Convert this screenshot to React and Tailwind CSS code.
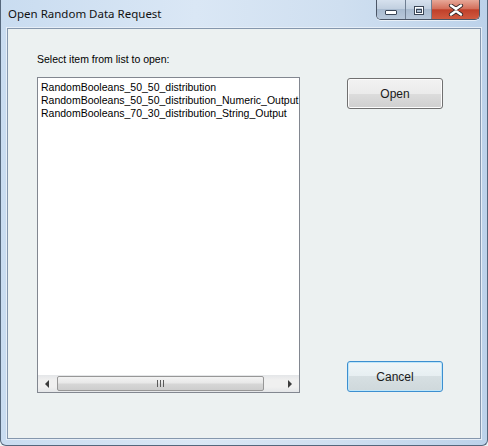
import React from "react";

const sans = { fontFamily: '"Liberation Sans", Arial, sans-serif' };

function TitleButtons() {
  return (
    <div className="flex h-[20px] mr-[7px] rounded-b-[5px] border border-t-0 border-[#4b5666] overflow-hidden shadow-[0_1px_0_rgba(255,255,255,0.6)]">
      <div className="w-[29px] h-full flex items-center justify-center bg-[linear-gradient(#d6e1ee,#c2d0e0_45%,#a9bbd0_50%,#b8c8da)] border-r border-[#6f7e92]">
        <svg width="14" height="8" viewBox="0 0 14 8" className="mt-[5px]">
          <rect x="1.5" y="2.5" width="11" height="4" fill="#fff" stroke="#3a4656" rx="0.5" />
        </svg>
      </div>
      <div className="w-[26px] h-full flex items-center justify-center bg-[linear-gradient(#d6e1ee,#c2d0e0_45%,#a9bbd0_50%,#b8c8da)] border-r border-[#6f7e92]">
        <svg width="12" height="11" viewBox="0 0 12 11" className="mt-[1px]">
          <rect x="1.5" y="1.5" width="9" height="8" fill="none" stroke="#3a4656" />
          <rect x="2.5" y="2.5" width="7" height="6" fill="none" stroke="#fff" />
          <rect x="3.5" y="4.5" width="5" height="3" fill="none" stroke="#3a4656" />
        </svg>
      </div>
      <div className="w-[47px] h-full flex items-center justify-center bg-[linear-gradient(#e7a898,#d4705c_45%,#c0402a_52%,#d05a40)]">
        <svg width="16" height="12" viewBox="0 0 16 12">
          <path d="M3 1.5 L8 5 L13 1.5 M3 10.5 L8 7 L13 10.5" stroke="#3a2a2a" strokeWidth="4.2" fill="none" strokeLinecap="round" />
          <path d="M3 1.5 L8 5 L13 1.5 M3 10.5 L8 7 L13 10.5" stroke="#fff" strokeWidth="2.4" fill="none" strokeLinecap="round" />
        </svg>
      </div>
    </div>
  );
}

function WinButton({ label, focused }) {
  return (
    <div
      className={
        "w-[96px] h-[31px] rounded-[3px] border flex items-center justify-center text-[12px] text-[#1a1a1a] " +
        (focused
          ? "border-[#3c8fd0] shadow-[inset_0_0_0_1px_#bfe6f9] bg-[linear-gradient(#f0f6f8,#e6eef1_50%,#d6dfe2_50%,#cfd8db)]"
          : "border-[#707070] shadow-[inset_0_0_0_1px_#fcfcfc] bg-[linear-gradient(#f2f2f2,#ebebeb_50%,#dddddd_50%,#cfcfcf)]")
      }
      style={sans}
    >
      {label}
    </div>
  );
}

export default function App() {
  return (
    <div className="w-[488px] h-[446px] overflow-hidden bg-[#eef3f3]">
      <div className="w-[488px] h-[446px] flex flex-col rounded-b-[6px] border-x border-b border-[#55677c] bg-[linear-gradient(90deg,#c9dcf0,#dae7f5_40%,#cfdff0_70%,#bcd2ea)]">
        <div className="h-[28px] flex items-start justify-between">
          <div
            className="pl-[7px] pt-[6px] text-[11.5px] leading-[16px] text-[#111]"
            style={{ fontFamily: '"Noto Sans", "Open Sans", sans-serif' }}
          >
            Open Random Data Request
          </div>
          <TitleButtons />
        </div>
        <div className="flex-1 mx-[6px] mb-[6px] border border-[#8597ad] shadow-[0_0_0_1px_#e6eef7] bg-[#ecf1f1] flex">
          <div className="pl-[29px] pt-[24px] flex flex-col">
            <div className="text-[10.5px] leading-[13px] text-black" style={sans}>
              Select item from list to open:
            </div>
            <div className="mt-[11px] w-[263px] h-[316px] border border-[#828790] bg-white flex flex-col">
              <div className="flex-1 pl-[3px] pt-[3px] text-[10.5px] leading-[13px] text-black whitespace-nowrap overflow-hidden" style={sans}>
                <div>RandomBooleans_50_50_distribution</div>
                <div>RandomBooleans_50_50_distribution_Numeric_Output</div>
                <div>RandomBooleans_70_30_distribution_String_Output</div>
              </div>
              <div className="h-[17px] flex items-stretch bg-[linear-gradient(#e4e6e8,#f0f0f0_30%,#f0f0f0_70%,#e4e6e8)]">
                <div className="w-[18px] flex items-center justify-center">
                  <svg width="5" height="8" viewBox="0 0 5 8">
                    <path d="M4 0 L0 4 L4 8 Z" fill="#3c3c3c" />
                  </svg>
                </div>
                <div className="flex-1 flex items-stretch py-[1px]">
                  <div className="w-[207px] ml-[1px] rounded-[2px] border border-[#979797] bg-[linear-gradient(#f3f3f3,#e8e8e8_45%,#d6d6d6_55%,#cdcdcd)] flex items-center justify-center">
                    <svg width="7" height="7" viewBox="0 0 7 7">
                      <path d="M0.5 0 V7 M3.5 0 V7 M6.5 0 V7" stroke="#5a5a5a" strokeWidth="1" />
                    </svg>
                  </div>
                </div>
                <div className="w-[18px] flex items-center justify-center">
                  <svg width="5" height="8" viewBox="0 0 5 8">
                    <path d="M0 0 L4 4 L0 8 Z" fill="#3c3c3c" />
                  </svg>
                </div>
              </div>
            </div>
          </div>
          <div className="ml-[47px] pt-[49px] pb-[46px] flex flex-col justify-between">
            <WinButton label="Open" />
            <WinButton label="Cancel" focused />
          </div>
        </div>
      </div>
    </div>
  );
}
